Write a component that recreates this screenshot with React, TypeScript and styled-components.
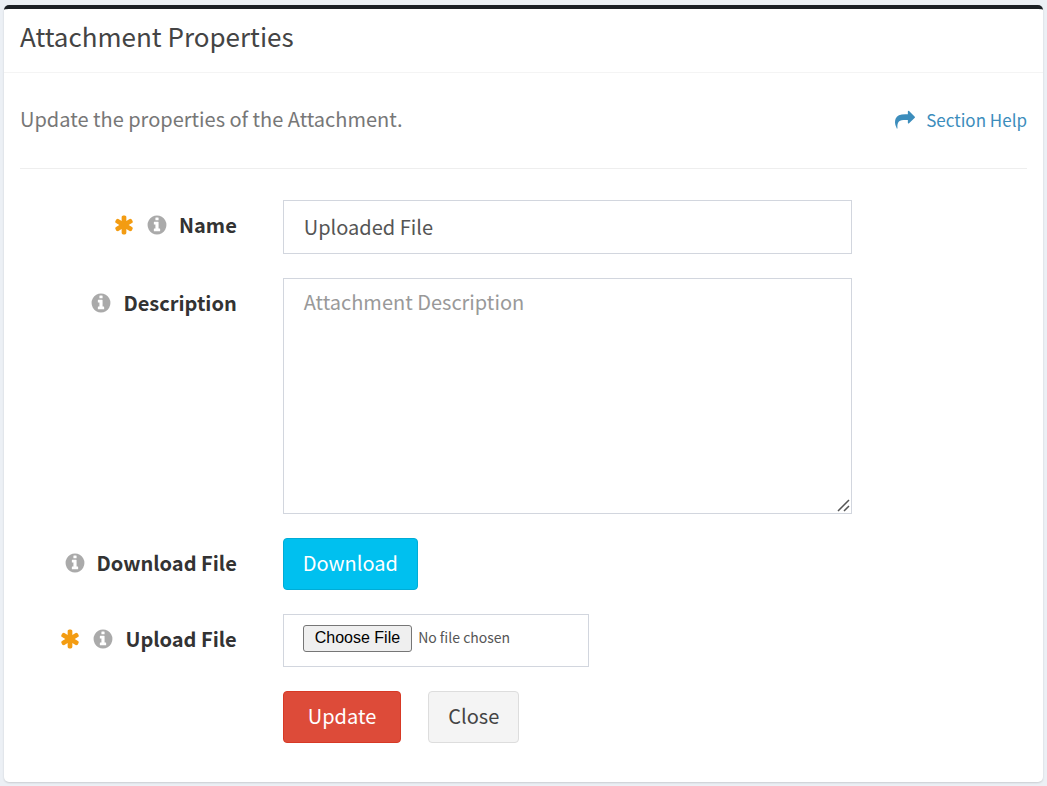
import React from "react";
import styled, { createGlobalStyle } from "styled-components";

const GlobalStyle = createGlobalStyle`
  *, *::before, *::after { box-sizing: border-box; }
  body {
    margin: 0;
    background: #ecf0f5;
    color: #333;
    font-family: "Noto Sans CJK SC", "Noto Sans", sans-serif;
    font-size: 20px;
    line-height: 30px;
  }
`;

const Page = styled.main`
  padding: 5px 4px 4px;
`;

const Box = styled.section`
  background: #fff;
  border-top: 4px solid #1c2025;
  border-radius: 5px;
  box-shadow: 0 1px 2px rgba(0, 0, 0, 0.15);
`;

const BoxHeader = styled.header`
  padding: 11px 16px 20px;
  border-bottom: 1px solid #f4f4f4;
`;

const Title = styled.h1`
  margin: 0;
  font-size: 26px;
  font-weight: 400;
  line-height: 32px;
  color: #444;
`;

const BoxBody = styled.div`
  padding: 31px 16px 39px;
`;

const Intro = styled.div`
  display: flex;
  justify-content: space-between;
  align-items: center;
  padding-bottom: 34px;
  border-bottom: 1px solid #eee;
`;

const IntroText = styled.p`
  margin: 0;
  color: #777;
`;

const HelpLink = styled.a`
  display: flex;
  align-items: center;
  gap: 11px;
  padding-top: 2px;
  font-size: 17px;
  line-height: 28px;
  color: #3c8dbc;
  text-decoration: none;
`;

const Form = styled.form`
  display: flex;
  flex-direction: column;
  gap: 24px;
  margin: 31px -22px 0;
`;

const Row = styled.div`
  display: grid;
  grid-template-columns: 3fr 7fr 2fr;
`;

const LabelCell = styled.div`
  display: flex;
  justify-content: flex-end;
  align-items: center;
  gap: 11px;
  height: 50px;
  padding-right: 24px;
`;

const Label = styled.label`
  font-weight: 700;
`;

const Field = styled.div`
  display: flex;
  align-items: flex-start;
  grid-column: 2;
  gap: 27px;
  padding: 0 22px;
`;

const TextInput = styled.input`
  width: 100%;
  height: 54px;
  padding: 0 20px 2px;
  border: 1px solid #d2d6de;
  background: #fff;
  font: inherit;
  color: #555;
`;

const TextAreaFrame = styled.div`
  position: relative;
  display: flex;
  width: 100%;
`;

const TextArea = styled.textarea`
  width: 100%;
  height: 236px;
  padding: 8px 20px;
  border: 1px solid #d2d6de;
  background: #fff;
  font: inherit;
  color: #555;
  resize: vertical;

  &::placeholder {
    color: #999;
  }

  &::-webkit-resizer {
    background: transparent;
  }
`;

const Grip = styled.svg`
  position: absolute;
  right: 2px;
  bottom: 2px;
  width: 13px;
  height: 13px;
  fill: none;
  stroke: #555;
  stroke-width: 1.5;
  pointer-events: none;
`;

const FileInput = styled.input`
  width: 306px;
  height: 53px;
  padding: 7px 19px;
  border: 1px solid #d2d6de;
  background: #fff;
  font-family: inherit;
  font-size: 14px;
  line-height: 30px;
  color: #555;

  &::file-selector-button {
    height: 27px;
    margin: 0 6px 0 0;
    padding: 0 11px 1px;
    border: 1px solid #767676;
    border-radius: 3px;
    background: #efefef;
    font-family: "Liberation Sans", Arial, sans-serif;
    font-size: 16px;
    color: #000;
  }
`;

const tones = {
  info: { background: "#00c0ef", border: "#00acd6", color: "#fff" },
  danger: { background: "#dd4b39", border: "#d73925", color: "#fff" },
  plain: { background: "#f4f4f4", border: "#ddd", color: "#444" },
};

const Button = styled.button<{ $tone: keyof typeof tones; $pad?: number }>`
  height: 52px;
  padding: 0 ${(p) => p.$pad ?? 19}px 3px;
  border: 1px solid ${(p) => tones[p.$tone].border};
  border-radius: 4px;
  background: ${(p) => tones[p.$tone].background};
  color: ${(p) => tones[p.$tone].color};
  font: inherit;
  cursor: pointer;
`;

const Icon = styled.svg<{ $size: number }>`
  width: ${(p) => p.$size}px;
  height: ${(p) => p.$size}px;
  flex: none;
  fill: currentColor;
`;

const Marks = styled.span`
  display: flex;
  gap: 11px;
  color: #aaa;
`;

const Required = styled.span`
  display: flex;
  color: #f39c12;
`;

const ShareIcon = () => (
  <Icon $size={20} viewBox="0 0 1792 1792" aria-hidden="true">
    <path d="M1792 640q0 26-19 45l-512 512q-19 19-45 19t-45-19-19-45v-256h-224q-98 0-175.5 6t-154 21.5-133 42.5-105.5 69.5-80 101-48.5 138.5-17.5 181q0 55 5 123 0 6 2.5 23.5t2.5 26.5q0 15-8.5 25t-23.5 10q-16 0-28-17-7-9-13-22t-13.5-30-10.5-24q-127-285-127-451 0-199 53-333 162-403 875-403h224v-256q0-26 19-45t45-19 45 19l512 512q19 19 19 45z" />
  </Icon>
);

const AsteriskIcon = () => (
  <Icon $size={22} viewBox="0 0 1792 1792" aria-hidden="true">
    <path d="M1546 1050q46 26 59.5 77.5t-12.5 97.5l-64 110q-26 46-77.5 59.5t-97.5-12.5l-266-153v307q0 52-38 90t-90 38h-128q-52 0-90-38t-38-90v-307l-266 153q-46 26-97.5 12.5t-77.5-59.5l-64-110q-26-46-12.5-97.5t59.5-77.5l266-154-266-154q-46-26-59.5-77.5t12.5-97.5l64-110q26-46 77.5-59.5t97.5 12.5l266 153v-307q0-52 38-90t90-38h128q52 0 90 38t38 90v307l266-153q46-26 97.5-12.5t77.5 59.5l64 110q26 46 12.5 97.5t-59.5 77.5l-266 154z" />
  </Icon>
);

const InfoIcon = () => (
  <Icon $size={22} viewBox="0 0 1792 1792" aria-hidden="true">
    <path d="M1152 1376v-160q0-14-9-23t-23-9h-96v-512q0-14-9-23t-23-9h-320q-14 0-23 9t-9 23v160q0 14 9 23t23 9h96v320h-96q-14 0-23 9t-9 23v160q0 14 9 23t23 9h448q14 0 23-9t9-23zm-128-896v-160q0-14-9-23t-23-9h-192q-14 0-23 9t-9 23v160q0 14 9 23t23 9h192q14 0 23-9t9-23zm640 416q0 209-103 385.5t-279.5 279.5-385.5 103-385.5-103-279.5-279.5-103-385.5 103-385.5 279.5-279.5 385.5-103 385.5 103 279.5 279.5 103 385.5z" />
  </Icon>
);

type FormRowProps = {
  id: string;
  label: string;
  required?: boolean;
  children: React.ReactNode;
};

const FormRow = ({ id, label, required, children }: FormRowProps) => (
  <Row>
    <LabelCell>
      <Marks>
        {required && (
          <Required>
            <AsteriskIcon />
          </Required>
        )}
        <InfoIcon />
      </Marks>
      <Label htmlFor={id}>{label}</Label>
    </LabelCell>
    <Field>{children}</Field>
  </Row>
);

export default function App() {
  return (
    <>
      <GlobalStyle />
      <Page>
        <Box>
          <BoxHeader>
            <Title>Attachment Properties</Title>
          </BoxHeader>
          <BoxBody>
            <Intro>
              <IntroText>Update the properties of the Attachment.</IntroText>
              <HelpLink href="#help">
                <ShareIcon />
                Section Help
              </HelpLink>
            </Intro>
            <Form onSubmit={(e) => e.preventDefault()}>
              <FormRow id="name" label="Name" required>
                <TextInput id="name" type="text" defaultValue="Uploaded File" />
              </FormRow>
              <FormRow id="description" label="Description">
                <TextAreaFrame>
                  <TextArea id="description" placeholder="Attachment Description" />
                  <Grip viewBox="0 0 13 13" aria-hidden="true">
                    <path d="M1 12L12 1M7 12l5-5" />
                  </Grip>
                </TextAreaFrame>
              </FormRow>
              <FormRow id="download" label="Download File">
                <Button id="download" type="button" $tone="info">
                  Download
                </Button>
              </FormRow>
              <FormRow id="upload" label="Upload File" required>
                <FileInput id="upload" type="file" />
              </FormRow>
              <Row>
                <Field>
                  <Button type="submit" $tone="danger" $pad={24}>
                    Update
                  </Button>
                  <Button type="button" $tone="plain">
                    Close
                  </Button>
                </Field>
              </Row>
            </Form>
          </BoxBody>
        </Box>
      </Page>
    </>
  );
}
